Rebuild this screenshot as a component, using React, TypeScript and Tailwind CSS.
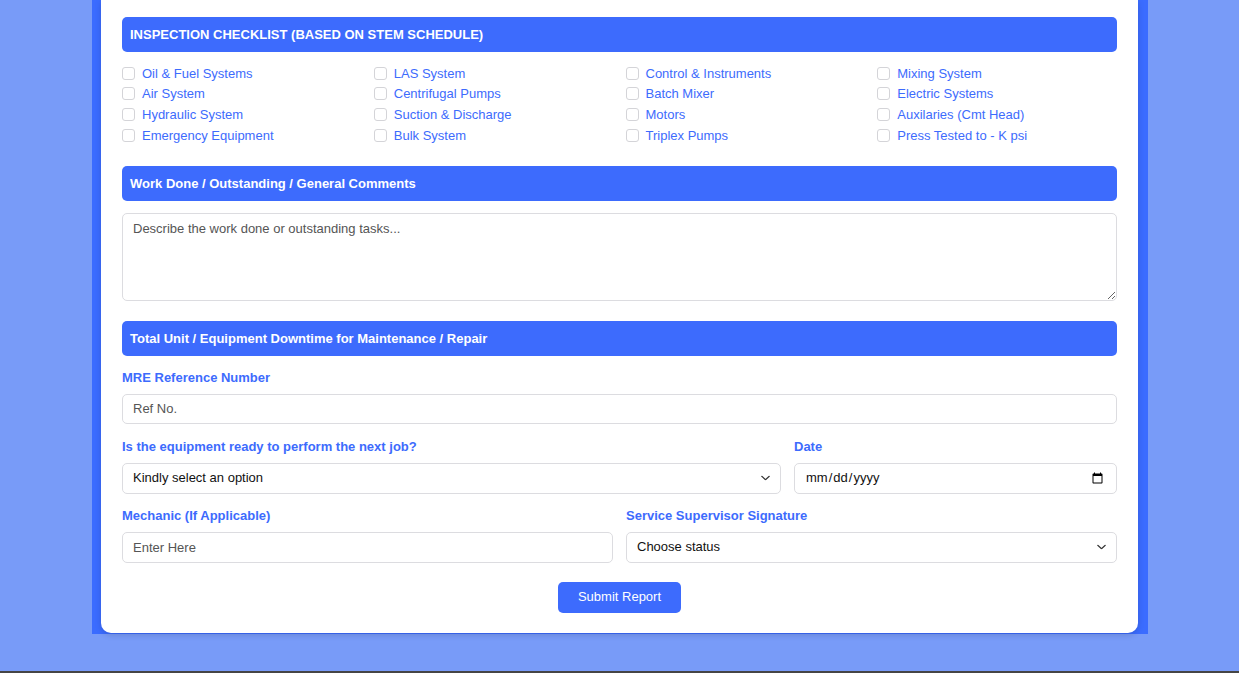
import React from 'react';

const checklist = [
    'Oil & Fuel Systems',
    'LAS System',
    'Control & Instruments',
    'Mixing System',
    'Air System',
    'Centrifugal Pumps',
    'Batch Mixer',
    'Electric Systems',
    'Hydraulic System',
    'Suction & Discharge',
    'Motors',
    'Auxilaries (Cmt Head)',
    'Emergency Equipment',
    'Bulk System',
    'Triplex Pumps',
    'Press Tested to - K psi',
];

const SectionHeader = ({ title }: { title: string }) => (
    <div className="h-[35px] rounded-[5px] bg-[#3d6bfd] px-2 pt-px flex items-center text-[13px] font-bold text-white">
        {title}
    </div>
);

const Label = ({ children }: { children: React.ReactNode }) => (
    <label className="block h-4 leading-[18px] text-[13px] font-bold text-[#3d6bfd]">{children}</label>
);

const Chevron = () => (
    <svg className="absolute right-[11px] top-1/2 -translate-y-1/2 pointer-events-none" width="9" height="5" viewBox="0 0 9 5" fill="none">
        <path d="M0.75 0.75L4.5 4.25L8.25 0.75" stroke="#333" strokeWidth="1.1" strokeLinecap="round" strokeLinejoin="round" />
    </svg>
);

const Select = ({ text }: { text: string }) => (
    <div className="relative">
        <select className="appearance-none w-full h-[31px] rounded-[5px] border border-[#dcdce0] bg-white pl-[10px] pr-8 text-[13px] text-[#111] outline-none">
            <option>{text}</option>
        </select>
        <Chevron />
    </div>
);

export default function App(): JSX.Element {
    return (
        <div className="min-h-[673px] flex flex-col bg-[#789bf8] font-['Liberation_Sans',Arial,sans-serif]">
            <div className="ml-[92px] w-[1056px] bg-[#3b6cff] pl-[9px] pr-[10px] pb-px">
                <div className="bg-white rounded-b-[10px] shadow-[0_2px_6px_rgba(0,0,0,0.15)] px-[21px] pt-[17px] pb-[20px]">
                    <SectionHeader title="INSPECTION CHECKLIST (BASED ON STEM SCHEDULE)" />

                    <div className="mt-[11px] grid grid-cols-4 gap-x-3">
                        {checklist.map((item) => (
                            <label key={item} className="h-[20.67px] flex items-center gap-[7px] text-[13px] text-[#3d6bfd]">
                                <input type="checkbox" className="appearance-none w-[13px] h-[13px] shrink-0 rounded-[3px] border border-[#d4d4d8] bg-white" />
                                <span>{item}</span>
                            </label>
                        ))}
                    </div>

                    <div className="mt-5">
                        <SectionHeader title="Work Done / Outstanding / General Comments" />
                    </div>
                    <textarea
                        placeholder="Describe the work done or outstanding tasks..."
                        className="mt-3 block w-full h-[88px] rounded-[5px] border border-[#dcdce0] px-[10px] pt-[5px] pb-[7px] text-[13px] text-[#333] placeholder:text-[#555] outline-none"
                    />

                    <div className="mt-5">
                        <SectionHeader title="Total Unit / Equipment Downtime for Maintenance / Repair" />
                    </div>

                    <div className="mt-[13px]">
                        <Label>MRE Reference Number</Label>
                        <input
                            placeholder="Ref No."
                            className="mt-[9px] block w-full h-[30px] rounded-[5px] border border-[#dcdce0] px-[10px] text-[13px] placeholder:text-[#555] outline-none"
                        />
                    </div>

                    <div className="mt-[14px] grid grid-cols-[1fr_323px] gap-x-[13px]">
                        <div>
                            <Label>Is the equipment ready to perform the next job?</Label>
                            <div className="mt-[9px]">
                                <Select text="Kindly select an option" />
                            </div>
                        </div>
                        <div>
                            <Label>Date</Label>
                            <input
                                type="date"
                                className="mt-[9px] block w-full h-[31px] rounded-[5px] border border-[#dcdce0] px-[10px] text-[13px] text-[#111] outline-none"
                            />
                        </div>
                    </div>

                    <div className="mt-[13px] grid grid-cols-2 gap-x-[13px]">
                        <div>
                            <Label>Mechanic (If Applicable)</Label>
                            <input
                                placeholder="Enter Here"
                                className="mt-[9px] block w-full h-[31px] rounded-[5px] border border-[#dcdce0] px-[10px] text-[13px] placeholder:text-[#555] outline-none"
                            />
                        </div>
                        <div>
                            <Label>Service Supervisor Signature</Label>
                            <div className="mt-[9px]">
                                <Select text="Choose status" />
                            </div>
                        </div>
                    </div>

                    <div className="mt-[19px] flex justify-center">
                        <button className="w-[123px] h-[31px] rounded-[5px] bg-[#3d6bfd] text-[13px] text-white">
                            Submit Report
                        </button>
                    </div>
                </div>
            </div>
            <div className="flex-1" />
            <div className="h-[2px] bg-[#454545]" />
        </div>
    );
}
